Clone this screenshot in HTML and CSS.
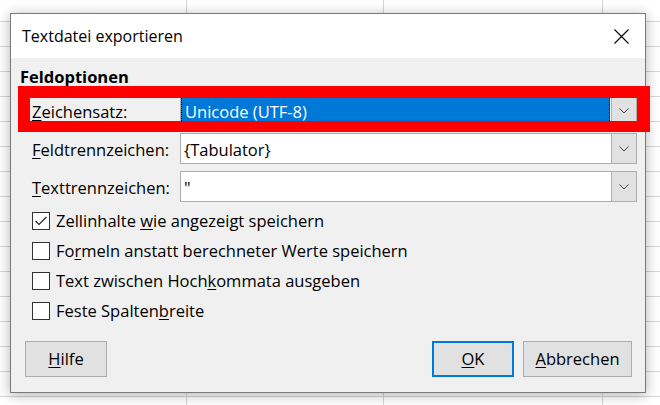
FILE: index.html
```html
<!DOCTYPE html>
<html lang="de">
<head>
<meta charset="utf-8">
<title>Textdatei exportieren</title>
<link rel="stylesheet" href="styles.css">
</head>
<body>
<div class="dialog">
  <div class="titlebar">
    <span class="title">Textdatei exportieren</span>
    <svg class="close" width="15" height="15" viewBox="0 0 15 15"><path d="M0.5 0.5 L14.5 14.5 M14.5 0.5 L0.5 14.5" stroke="#000" stroke-width="1.1" fill="none"/></svg>
  </div>
  <div class="content">
    <div class="section-title">Feldoptionen</div>
    <div class="field-row first">
      <span class="field-label"><u>Z</u>eichensatz:</span>
      <div class="combo">
        <div class="combo-text focused">Unicode (UTF-8)</div>
        <div class="combo-btn"><svg width="10" height="6" viewBox="0 0 10 6"><path d="M0.5 0.5 L5 5 L9.5 0.5" stroke="#444" stroke-width="1" fill="none"/></svg></div>
      </div>
    </div>
    <div class="field-row">
      <span class="field-label"><u>F</u>eldtrennzeichen:</span>
      <div class="combo">
        <div class="combo-text">{Tabulator}</div>
        <div class="combo-btn"><svg width="10" height="6" viewBox="0 0 10 6"><path d="M0.5 0.5 L5 5 L9.5 0.5" stroke="#444" stroke-width="1" fill="none"/></svg></div>
      </div>
    </div>
    <div class="field-row">
      <span class="field-label"><u>T</u>exttrennzeichen:</span>
      <div class="combo">
        <div class="combo-text">"</div>
        <div class="combo-btn"><svg width="10" height="6" viewBox="0 0 10 6"><path d="M0.5 0.5 L5 5 L9.5 0.5" stroke="#444" stroke-width="1" fill="none"/></svg></div>
      </div>
    </div>
    <div class="checks">
      <div class="check-row"><span class="box"><svg width="16" height="16" viewBox="0 0 16 16"><path d="M2.5 8 L6 11.5 L13.5 4" stroke="#222" stroke-width="1.2" fill="none"/></svg></span><span>Zellinhalte <u>w</u>ie angezeigt speichern</span></div>
      <div class="check-row"><span class="box"></span><span>Fo<u>r</u>meln anstatt berechneter Werte speichern</span></div>
      <div class="check-row"><span class="box"></span><span>Text zwischen Hoch<u>k</u>ommata ausgeben</span></div>
      <div class="check-row"><span class="box"></span><span>Feste Spalten<u>b</u>reite</span></div>
    </div>
    <div class="buttons">
      <button class="btn"><u>H</u>ilfe</button>
      <span class="spacer"></span>
      <button class="btn btn-default"><u>O</u>K</button>
      <button class="btn btn-wide"><u>A</u>bbrechen</button>
    </div>
  </div>
</div>
<div class="highlight"></div>
</body>
</html>
```
FILE: styles.css
```css
html, body {
  margin: 0;
}
body {
  width: 660px;
  height: 405px;
  box-sizing: border-box;
  padding: 13px 0 0 10px;
  overflow: hidden;
  position: relative;
  font-family: "Open Sans", "Noto Sans", sans-serif;
  font-size: 16.5px;
  color: #000;
  background-color: #fff;
  background-image:
    linear-gradient(to right, transparent 186px, #d6d6d6 186px, #d6d6d6 187px, transparent 187px),
    linear-gradient(to right, transparent 383px, #d6d6d6 383px, #d6d6d6 384px, transparent 384px),
    linear-gradient(to right, transparent 602px, #d6d6d6 602px, #d6d6d6 603px, transparent 603px),
    repeating-linear-gradient(to bottom, transparent 0, transparent 21px, #d6d6d6 21px, #d6d6d6 22px, transparent 22px, transparent 25px);
}
u {
  text-decoration-thickness: 1px;
  text-underline-offset: 2px;
}
.dialog {
  width: 636px;
  height: 380px;
  box-sizing: border-box;
  border: 1px solid #7a7a7a;
  background: #f0f0f0;
  box-shadow: 0 2px 12px rgba(0, 0, 0, 0.3);
  display: flex;
  flex-direction: column;
}
.titlebar {
  height: 44px;
  flex: none;
  background: #fff;
  display: flex;
  align-items: center;
  justify-content: space-between;
  padding: 0 16px 0 11px;
}
.title {
  font-size: 16px;
  line-height: 22px;
}
.close {
  display: block;
}
.content {
  flex: 1;
  display: flex;
  flex-direction: column;
  padding: 8px 8px 15px 9px;
}
.section-title {
  font-weight: 700;
  line-height: 22px;
}
.field-row {
  display: flex;
  height: 31px;
  padding-left: 12px;
  margin-top: 7px;
}
.field-label {
  width: 148px;
  flex: none;
  padding-top: 2px;
  line-height: 29px;
  white-space: nowrap;
}
.combo {
  flex: 1;
  display: flex;
  box-sizing: border-box;
  border: 1px solid #adadad;
  background: #fff;
}
.combo-text {
  flex: 1;
  padding: 2px 0 0 3px;
  line-height: 27px;
  white-space: nowrap;
}
.combo-text.focused {
  background: #0078d7;
  color: #fff;
  border-left: 1px dotted #000;
  border-right: 1px dotted #000;
  margin-right: 1px;
}
.combo-btn {
  width: 24px;
  flex: none;
  background: #e1e1e1;
  border-left: 1px solid #adadad;
  display: flex;
  align-items: center;
  justify-content: center;
}
.combo-btn svg {
  display: block;
}
.checks {
  margin-top: 4px;
  padding-left: 12px;
  display: flex;
  flex-direction: column;
}
.check-row {
  height: 30px;
  line-height: 30px;
  display: flex;
  align-items: center;
  gap: 6px;
  white-space: nowrap;
}
.box {
  width: 18px;
  height: 18px;
  box-sizing: border-box;
  border: 1px solid #333;
  background: #fff;
  flex: none;
  display: flex;
  align-items: center;
  justify-content: center;
}
.box svg {
  display: block;
}
.buttons {
  margin-top: auto;
  display: flex;
  gap: 9px;
  padding: 0 5px;
}
.spacer {
  flex: 1;
}
.btn {
  width: 82px;
  height: 36px;
  box-sizing: border-box;
  border: 1px solid #adadad;
  background: #e1e1e1;
  font-family: inherit;
  font-size: 16.5px;
  color: #000;
  padding: 0;
  line-height: 30px;
}
.btn-default {
  border: 2px solid #0078d7;
}
.btn-wide {
  width: 109px;
}
.highlight {
  position: absolute;
  left: 18px;
  top: 86px;
  width: 632px;
  height: 46px;
  box-sizing: border-box;
  border-style: solid;
  border-color: #ff0000;
  border-width: 12px 13px 11px 12px;
}
```
